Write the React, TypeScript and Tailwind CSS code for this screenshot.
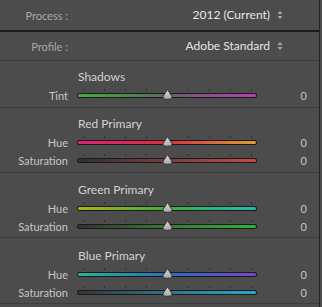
import React from "react";

type SliderDef = { label: string; grad: string };
type Section = { title: string; pt: string; pb: string; sliders: SliderDef[] };

const sections: Section[] = [
  {
    title: "Shadows",
    pt: "pt-[7px]",
    pb: "pb-[3px]",
    sliders: [{ label: "Tint", grad: "bg-[linear-gradient(90deg,#3faf3f,#5f6a5f_48%,#6a5f6a_52%,#b53fb8)]" }],
  },
  {
    title: "Red Primary",
    pt: "pt-[7px]",
    pb: "pb-[3px]",
    sliders: [
      { label: "Hue", grad: "bg-[linear-gradient(90deg,#e2217f,#d9303f_50%,#e49b34)]" },
      { label: "Saturation", grad: "bg-[linear-gradient(90deg,#303030,#7a3d3d_50%,#c64a4a)]" },
    ],
  },
  {
    title: "Green Primary",
    pt: "pt-[8px]",
    pb: "pb-[2px]",
    sliders: [
      { label: "Hue", grad: "bg-[linear-gradient(90deg,#b0b020,#3bb23b_50%,#27b6b6)]" },
      { label: "Saturation", grad: "bg-[linear-gradient(90deg,#333333,#377a37_50%,#30b330)]" },
    ],
  },
  {
    title: "Blue Primary",
    pt: "pt-[9px]",
    pb: "pb-[2px]",
    sliders: [
      { label: "Hue", grad: "bg-[linear-gradient(90deg,#2ab68c,#2a6fc0_50%,#7b46c9)]" },
      { label: "Saturation", grad: "bg-[linear-gradient(90deg,#333333,#2f7488_50%,#2aa9c9)]" },
    ],
  },
];

const ticks = [0, 1, 2, 3, 5, 6, 7, 8];

function UpDown() {
  return (
    <svg width="6" height="10" viewBox="0 0 6 10" className="ml-[7px]">
      <path d="M0.5 4 L3 1 L5.5 4 Z" fill="#a9a9a9" />
      <path d="M0.5 6 L3 9 L5.5 6 Z" fill="#a9a9a9" />
    </svg>
  );
}

function Thumb() {
  return (
    <svg width="11" height="11" viewBox="0 0 11 11" className="absolute left-[85px] top-[-4px]">
      <defs>
        <linearGradient id="tg" x1="0" y1="0" x2="0" y2="1">
          <stop offset="0" stopColor="#dcdcdc" />
          <stop offset="1" stopColor="#a6a6a6" />
        </linearGradient>
      </defs>
      <path
        d="M5.5 0.6 L9.8 7.2 Q10.5 9.2 8.8 10 Q5.5 10.6 2.2 10 Q0.5 9.2 1.2 7.2 Z"
        fill="url(#tg)"
        stroke="#2a2a2a"
        strokeWidth="0.9"
      />
    </svg>
  );
}

function Slider({ label, grad }: SliderDef) {
  return (
    <div className="flex h-[18px] items-center">
      <div className="w-[68px] text-right text-[11px] leading-none text-[#c6c6c6]">{label}</div>
      <div className="relative ml-[9px] h-[5px] w-[180px]">
        {ticks.map((t) => (
          <div
            key={t}
            className="absolute top-[-4px] h-[2px] w-px bg-[#2c2c2c]"
            style={{ left: 6 + t * 21 }}
          />
        ))}
        <div className="h-[5px] w-full rounded-full bg-[#1a1a1a] p-px">
          <div className={`h-[3px] w-full rounded-full ${grad}`} />
        </div>
        <Thumb />
      </div>
      <div className="flex-1 pr-[12px] text-right text-[11px] leading-none text-[#c6c6c6]">0</div>
    </div>
  );
}

export default function App() {
  return (
    <div className="h-[307px] w-[322px] overflow-hidden bg-[#4c4c4c] font-[family-name:Lato,sans-serif]">
      <div className="h-[307px] w-[320px] border-r border-[#232323]">
        <div className="flex h-[30px] items-center">
          <div className="w-[68px] text-right text-[11px] leading-none text-[#a9a9a9]">Process :</div>
          <div className="flex flex-1 items-center justify-end pr-[36px]">
            <span className="text-[12px] leading-none text-[#e6e6e6]">2012 (Current)</span>
            <UpDown />
          </div>
        </div>
        <div className="h-[2px] bg-[#1c1c1c]" />
        <div className="flex h-[29px] items-center border-b border-[#3d3d3d]">
          <div className="w-[68px] text-right text-[11px] leading-none text-[#a9a9a9]">Profile :</div>
          <div className="flex flex-1 items-center justify-end pr-[36px]">
            <span className="text-[12px] leading-none text-[#e6e6e6]">Adobe Standard</span>
            <UpDown />
          </div>
        </div>
        {sections.map((s) => (
          <div key={s.title} className={`border-b border-[#3d3d3d] ${s.pt} ${s.pb}`}>
            <div className="mb-[2px] flex h-[16px] items-center pl-[78px] pt-[2px] text-[12px] leading-none text-[#d2d2d2]">
              {s.title}
            </div>
            {s.sliders.map((sl) => (
              <Slider key={sl.label} {...sl} />
            ))}
          </div>
        ))}
      </div>
    </div>
  );
}
